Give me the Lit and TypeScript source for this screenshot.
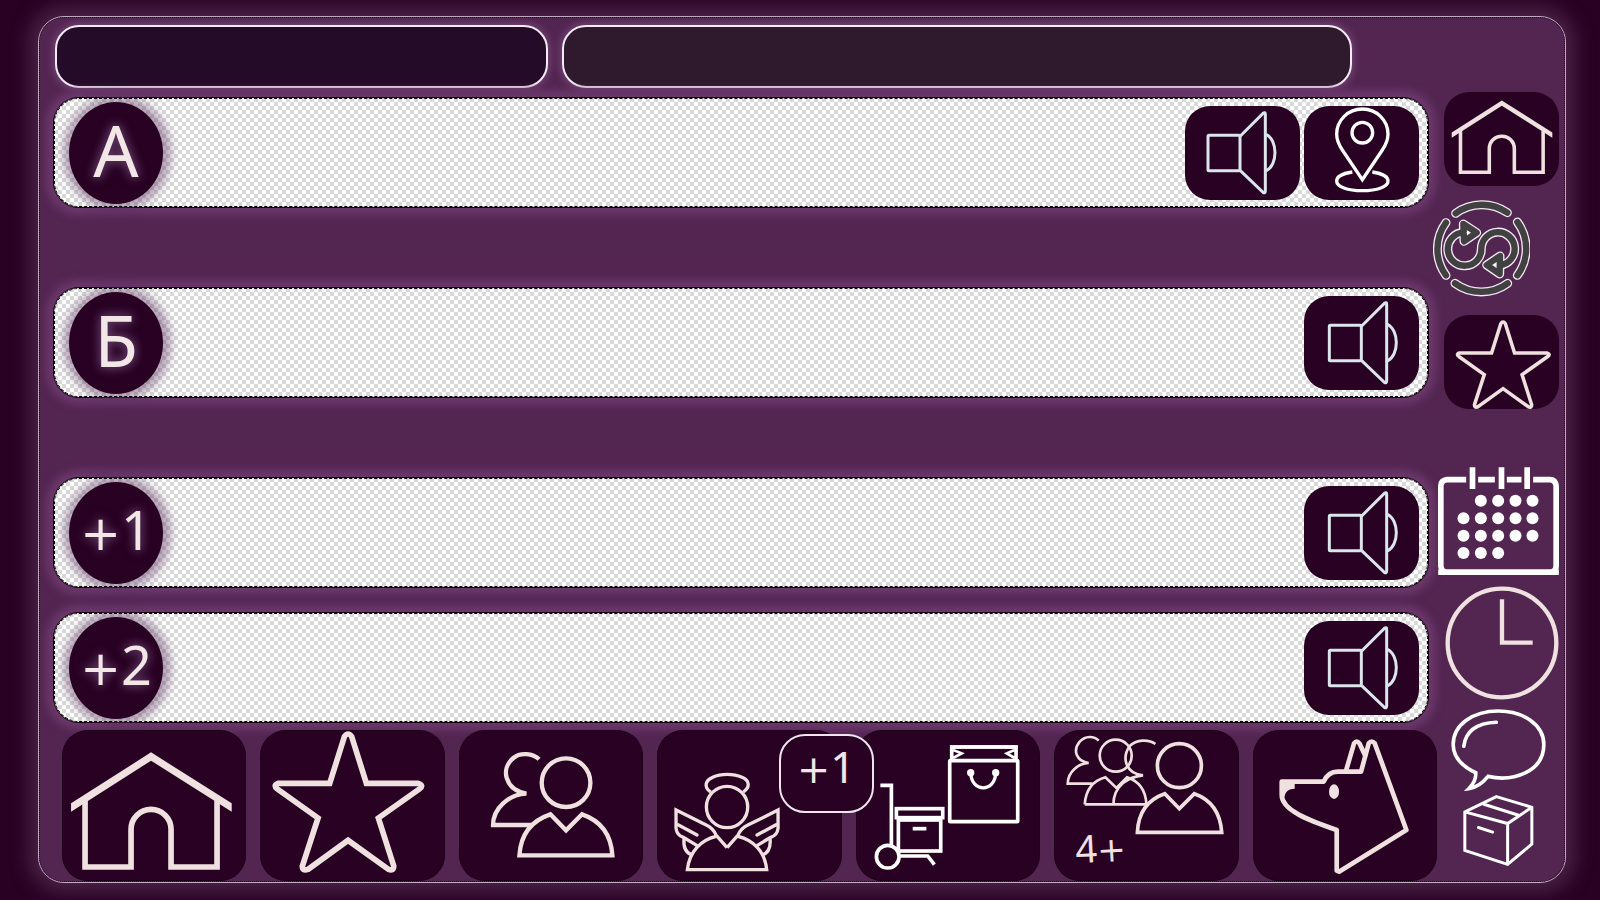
import { LitElement, html, svg, css, nothing } from "lit";
import { customElement } from "lit/decorators.js";

const home = svg`
  <path class="solid" d="M213 310L453 157L695 310V335L453 182L213 335Z"/>
  <path class="line w17" d="M255 302V501H393V388A60 60 0 0 1 513 388V501H651V302"/>`;

const star = svg`
  <path class="line w17" d="M1035 110Q1046 94 1057 110L1101 250H1256Q1275 256 1260 267L1137 354L1183 498Q1183 514 1167 508L1046 421L926 508Q908 514 909 498L956 354L834 267Q820 256 836 250H991Z"/>`;

const friends = svg`
  <g class="line w13">
    <path d="M296 178C278 160 240 156 219 174C180 206 192 268 258 281C205 283 158 325 158 375H278"/>
    <circle cx="377" cy="248" r="73"/>
    <path d="M237 466H516Q510 372 425 343L377 391L330 343Q243 372 237 466Z"/>
  </g>`;

const wing = svg`
  <path d="M861 443L828 405Q818 384 800 376L708 330V385Q710 405 730 412L775 439"/>
  <path class="round" d="M714 374L771 405"/>
  <path d="M732 416Q728 456 756 465"/>`;

const angel = svg`
  <g class="line w10">
    <circle cx="861" cy="321" r="62"/>
    <path d="M812 276C790 262 796 240 818 232C842 220 880 220 906 232C930 242 930 262 910 276"/>
    <path d="M828 409C782 420 748 455 742 509H980C975 455 940 420 894 409"/>
    ${wing}
    <g transform="translate(1722 0) scale(-1 1)">${wing}</g>
  </g>`;

const delivery = svg`
  <g class="line white w11">
    <path d="M334 180V141H527V180"/>
    <path d="M329 141H532"/>
    <path class="w8" d="M338 150L364 160L338 174M523 150L499 160L523 174"/>
    <rect x="328" y="182" width="204" height="183" rx="2"/>
    <path class="w10" d="M391 217C391 279 466 279 466 217"/>
    <path d="M120 256H153V435"/>
    <circle cx="142" cy="470" r="34"/>
    <path d="M176 468H262L282 494"/>
    <rect x="174" y="360" width="127" height="93"/>
    <rect x="168" y="326" width="139" height="27"/>
    <path d="M217 386H258"/>
  </g>
  <circle class="solid white" cx="391" cy="218" r="11"/>
  <circle class="solid white" cx="466" cy="218" r="11"/>`;

const crowd = svg`
  <g class="line w8">
    <path d="M775 122C760 107 735 107 718 125C695 153 710 185 745 189C715 190 682 215 682 251H757"/>
    <circle cx="826" cy="167" r="48"/>
    <path d="M733 313H922M733 313Q738 248 795 232L828 264L860 232Q915 250 918 313"/>
    <path d="M945 132C925 117 888 118 868 138C842 175 858 222 908 226C866 230 820 255 819 313"/>
  </g>
  <g class="line w11">
    <circle cx="1017" cy="197" r="66"/>
    <path d="M891 397H1144Q1138 308 1062 281L1017 326L973 281Q895 308 891 397Z"/>
  </g>
  <text class="count" x="707" y="490" transform="rotate(-3 707 490)">4<tspan class="plus">+</tspan></text>`;

const dog = svg`
  <g class="line w14 round">
    <path d="M152 245H278Q291 215 320 215H390L413 130Q422 119 431 130L526 390L324 515L317 512V390C230 360 152 330 152 285Z"/>
    <path d="M345 212L369 130Q377 119 385 130L402 166"/>
  </g>
  <path class="solid" d="M148 242H191V266Q164 266 160 290L150 290Z"/>
  <ellipse class="solid" cx="309" cy="275" rx="15" ry="22"/>`;

const speaker = svg`
  <g class="line pale w9">
    <rect x="202" y="406" width="96" height="106" rx="3"/>
    <path d="M299 408L367 340Q374 335 374 343V573Q374 581 367 577L299 512"/>
    <path d="M376 403C412 420 412 495 376 513"/>
  </g>`;

const pin = svg`
  <g class="line white w10">
    <path d="M665 539L605 450Q588 425 588 402A77 75 0 0 1 742 402Q742 425 725 450Z"/>
    <circle cx="665" cy="398" r="31"/>
    <path d="M635 516C600 521 588 533 588 543C588 560 620 572 665 572S742 560 742 543C742 533 730 521 695 516"/>
  </g>`;

const syncShape = svg`
  <path d="M945 640A134 134 0 0 1 1100 638M916 668A134 134 0 0 0 916 826M1130 666A134 134 0 0 1 1130 826M943 850A134 134 0 0 0 1101 850"/>
  <path d="M968 697A50 50 0 0 0 975 797A48 50 0 0 0 1022 747A50 50 0 1 1 1078 796"/>
  <path d="M968 672L1008 698L970 724ZM1078 768L1038 795L1077 822Z"/>`;

const sync = svg`
  <g class="halo">${syncShape}</g>
  <g class="core">${syncShape}</g>
  <circle class="solid white" cx="982" cy="698" r="4"/>
  <circle class="solid white" cx="1063" cy="795" r="4"/>`;

const dots: Array<[number, number, number]> = [
  [662, 1, 5],
  [715, 0, 5],
  [767, 0, 5],
  [819, 0, 3],
];

const calendar = svg`
  <path class="line white w17" d="M619 599H562Q543 601 543 618V858Q545 877 562 877H870Q889 875 889 858V618Q887 599 870 599H820M655 599H705M741 599H785"/>
  <path class="line white w17" d="M638 562V627M725 562V627M802 562V627M535 877H897"/>
  ${dots.map(([y, from, to]) =>
    [611, 663, 715, 767, 818]
      .slice(from, to)
      .map((x) => svg`<circle class="solid white" cx=${x} cy=${y} r="18"/>`)
  )}`;

const clock = svg`
  <circle class="line w13" cx="726" cy="219" r="163"/>
  <path class="line w13" d="M726 88V218H818"/>`;

const bubble = svg`
  <path class="line white w11" d="M775 231C850 248 943 218 943 135C943 75 880 34 806 34C730 34 670 75 670 135C670 175 700 202 738 220Q740 245 717 268Q748 264 775 231Z"/>
  <path class="line white w11 round" d="M702 140Q710 72 800 68"/>`;

const parcel = svg`
  <g class="line white w9">
    <path d="M795 289L902 321V432L829 493L700 451V335Z"/>
    <path d="M700 335L829 370L902 321M829 370V493M755 311L862 345"/>
    <path class="round" d="M741 382L784 396"/>
  </g>`;

const icon = (box: string, shape: unknown) =>
  html`<svg viewBox=${box} aria-hidden="true">${shape}</svg>`;

const rows = [
  { id: "point-a", sign: "", mark: "А", pinned: true },
  { id: "point-b", sign: "", mark: "Б", pinned: false },
  { id: "stop-1", sign: "+", mark: "1", pinned: false },
  { id: "stop-2", sign: "+", mark: "2", pinned: false },
];

const tiles = [
  { name: "Дом", box: "187 90 551 453", shape: home },
  { name: "Избранное", box: "783 90 551 453", shape: star },
  { name: "Друзья", box: "57 90 551 453", shape: friends },
  { name: "Ангел", box: "652 90 551 453", shape: angel, badge: "1" },
  { name: "Доставка", box: "48 90 551 453", shape: delivery },
  { name: "Группа", box: "642 90 551 453", shape: crowd },
  { name: "Питомец", box: "67 90 551 453", shape: dog },
];

const tools = [
  { kind: "chip", name: "Дом", box: "176 117 551 449", shape: home },
  { kind: "sync", name: "Обмен", box: "877 600 291 291", shape: sync },
  { kind: "chip star", name: "Избранное", box: "763 69 551 449", shape: star },
  { kind: "calendar", name: "Календарь", box: "535 558 362 327", shape: calendar },
  { kind: "clock", name: "Время", box: "556 48 340 342", shape: clock },
  { kind: "bubble", name: "Сообщение", box: "664 28 285 247", shape: bubble },
  { kind: "parcel", name: "Посылка", box: "695 284 213 214", shape: parcel },
];

@customElement("app-root")
export class AppRoot extends LitElement {
  static styles = css`
    :host {
      display: flex;
      box-sizing: border-box;
      min-height: 100vh;
      padding: 16px 34px 17px 38px;
      background: #290223;
      overflow: hidden;
      font-family: "Noto Sans", "Open Sans", sans-serif;
      color: #f3e6e6;
    }
    * {
      box-sizing: border-box;
    }
    button,
    input {
      margin: 0;
      padding: 0;
      border: 0;
      background: none;
      font: inherit;
      color: inherit;
    }
    button {
      cursor: pointer;
    }
    svg {
      display: block;
      width: 100%;
      height: 100%;
    }
    .frame {
      flex: 1;
      min-width: 0;
      display: grid;
      grid-template-columns: minmax(0, 1fr) 122px;
      padding: 8px 6px 1px 14px;
      border: 1px solid #c3acc3;
      border-radius: 26px;
      outline: 1px dotted #1c071b;
      outline-offset: -2px;
      background: #532551;
      box-shadow: 0 0 18px 9px #4a2247;
    }
    .main {
      display: flex;
      flex-direction: column;
    }
    .heads {
      display: grid;
      grid-template-columns: 493fr 790fr;
      gap: 14px;
      margin: 0 85px 9px 2px;
    }
    .head {
      min-width: 0;
      height: 63px;
      padding: 0 24px;
      border: 2px solid #f4ebf4;
      border-radius: 24px;
      background: #240b27;
      box-shadow: 0 0 8px 1px #7b4d7f;
      font-size: 24px;
    }
    .head.second {
      background: #2e192d;
    }
    .row {
      display: flex;
      align-items: center;
      height: 111px;
      margin: 0 8px 79px 0;
      padding: 0 9px 0 15px;
      border: 1px solid #16020f;
      border-radius: 26px;
      outline: 1px dashed #000;
      outline-offset: -2px;
      background: repeating-conic-gradient(#fff 0 25%, #d9d9d9 0 50%) 0 0 / 8px 8px;
      box-shadow: 0 0 8px 7px #6b386b;
    }
    .row:nth-of-type(4) {
      margin-bottom: 24px;
    }
    .row:nth-of-type(5) {
      margin-bottom: 7px;
    }
    .mark {
      flex: none;
      display: flex;
      align-items: center;
      justify-content: center;
      width: 94px;
      height: 102px;
      padding-bottom: 6px;
      border-radius: 50%;
      background: #290223;
      box-shadow: 1px 0 9px 7px rgba(92, 52, 96, 0.45);
      font-size: 71px;
      line-height: 1;
      text-shadow: 0 0 12px #5b3660, 0 0 10px #6d4672;
    }
    .mark.extra {
      font-size: 54px;
    }
    .plus {
      font-family: "DejaVu Sans", sans-serif;
      font-size: 0.9em;
    }
    .field {
      flex: 1;
      min-width: 0;
      height: 100%;
      padding: 0 24px;
      font-size: 32px;
      color: #290223;
    }
    .actions {
      display: flex;
      gap: 4px;
    }
    .chip {
      width: 115px;
      height: 94px;
      border-radius: 25px;
      background: #290223;
    }
    .tiles {
      display: grid;
      grid-template-columns: repeat(7, minmax(0, 1fr));
      gap: 14px;
      margin-left: 9px;
    }
    .tile {
      position: relative;
      height: 151px;
      border-radius: 26px;
      background: #290223;
      outline: 1px dotted #160113;
      outline-offset: -1px;
    }
    .badge {
      position: absolute;
      z-index: 1;
      top: 4px;
      right: -32px;
      display: flex;
      align-items: center;
      justify-content: center;
      width: 95px;
      height: 79px;
      padding-bottom: 14px;
      border: 2px solid #f0e4f0;
      border-radius: 26px;
      background: #290223;
      font-size: 44px;
      line-height: 1;
    }
    .tools {
      display: flex;
      flex-direction: column;
      align-items: flex-end;
      padding-top: 67px;
    }
    .tool {
      flex: none;
    }
    .tool.sync {
      align-self: flex-start;
      width: 97px;
      height: 97px;
      margin: 14px 0 18px -4px;
    }
    .tool.star {
      margin-bottom: 57px;
    }
    .tool.calendar {
      width: 121px;
      height: 109px;
      margin-bottom: 11px;
    }
    .tool.clock {
      width: 114px;
      height: 114px;
      margin-bottom: 9px;
    }
    .tool.bubble {
      align-self: center;
      width: 95px;
      height: 82px;
      margin-bottom: 4px;
    }
    .tool.parcel {
      align-self: center;
      width: 71px;
      height: 71px;
    }
    .line {
      fill: none;
      stroke: #efe1e0;
    }
    .solid {
      fill: #efe1e0;
    }
    .line.white {
      stroke: #fff;
    }
    .solid.white {
      fill: #fff;
    }
    .line.pale {
      stroke: #dbe5ee;
    }
    .round {
      stroke-linecap: round;
      stroke-linejoin: round;
    }
    .w8 { stroke-width: 8; }
    .w9 { stroke-width: 9; }
    .w10 { stroke-width: 10; }
    .w11 { stroke-width: 11; }
    .w13 { stroke-width: 13; }
    .w14 { stroke-width: 14; }
    .w17 { stroke-width: 17; }
    .halo,
    .core {
      fill: none;
      stroke: #f3e8f3;
      stroke-width: 27;
      stroke-linecap: round;
      stroke-linejoin: round;
    }
    .core {
      stroke: #414141;
      stroke-width: 19;
    }
    .count {
      fill: #efe1e0;
      font-size: 114px;
    }
  `;

  private label(sign: string, mark: string) {
    return html`<span>${sign ? html`<span class="plus">${sign}</span>` : nothing}${mark}</span>`;
  }

  render() {
    return html`
      <div class="frame">
        <main class="main">
          <div class="heads">
            <input class="head" type="text" aria-label="Имя" />
            <input class="head second" type="text" aria-label="Адрес" />
          </div>
          ${rows.map(
            (row) => html`
              <div class="row">
                <label class="mark ${row.sign ? "extra" : ""}" for=${row.id}
                  >${this.label(row.sign, row.mark)}</label
                >
                <input class="field" type="text" id=${row.id} />
                <div class="actions">
                  <button class="chip" type="button" aria-label="Озвучить">
                    ${icon(row.pinned ? "133 318 345 282" : "126 318 345 282", speaker)}
                  </button>
                  ${row.pinned
                    ? html`<button class="chip" type="button" aria-label="На карте">
                        ${icon("490 318 345 282", pin)}
                      </button>`
                    : nothing}
                </div>
              </div>
            `
          )}
          <div class="tiles">
            ${tiles.map(
              (tile) => html`
                <button class="tile" type="button" aria-label=${tile.name}>
                  ${icon(tile.box, tile.shape)}
                  ${tile.badge
                    ? html`<span class="badge">${this.label("+", tile.badge)}</span>`
                    : nothing}
                </button>
              `
            )}
          </div>
        </main>
        <nav class="tools">
          ${tools.map(
            (tool) => html`
              <button class="tool ${tool.kind}" type="button" aria-label=${tool.name}>
                ${icon(tool.box, tool.shape)}
              </button>
            `
          )}
        </nav>
      </div>
    `;
  }
}
